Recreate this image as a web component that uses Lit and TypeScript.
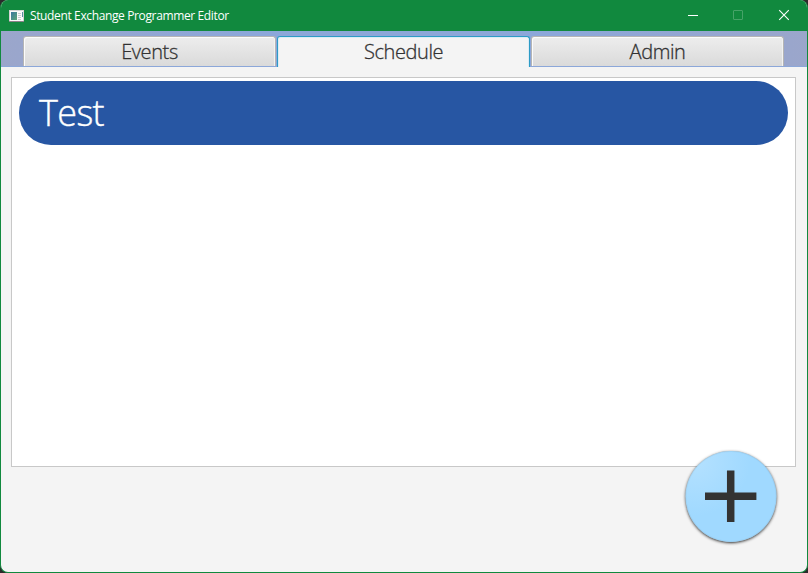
import { LitElement, html, css } from "lit";
import { customElement, property, state } from "lit/decorators.js";
import { classMap } from "lit/directives/class-map.js";

@customElement("title-bar")
class TitleBar extends LitElement {
  @property() heading = "";

  static styles = css`
    :host {
      display: flex;
      align-items: center;
      height: 31px;
      flex: none;
      box-sizing: border-box;
      padding-left: 8px;
      margin-right: -1px;
      background: #11893e;
      color: #fff;
    }
    .app-icon { flex: none; margin-right: 6px; }
    .heading {
      flex: 1;
      font: 12px/31px "Open Sans", "Noto Sans", sans-serif;
      letter-spacing: -0.37px;
      white-space: nowrap;
    }
    .control {
      width: 46px;
      height: 31px;
      flex: none;
    }
  `;

  render() {
    return html`
      <svg class="app-icon" width="15" height="12" viewBox="0 0 15 12" shape-rendering="crispEdges">
        <defs>
          <linearGradient id="screen" x1="0" y1="0" x2="1" y2="1">
            <stop offset="0" stop-color="#3b78a0" />
            <stop offset="1" stop-color="#5da577" />
          </linearGradient>
        </defs>
        <rect width="15" height="12" fill="#8c8288" />
        <rect width="15" height="11" fill="#d4d4d4" />
        <rect x="1" y="1" width="13" height="10" fill="#fafafa" />
        <rect x="2" y="2" width="6" height="8" fill="url(#screen)" />
        <path d="M9 3.5h3M9 5.5h3M9 7.5h3M9 9.5h3" stroke="#c9cccf" />
        <rect x="13" y="2" width="1" height="5" fill="#5b8fa3" />
      </svg>
      <span class="heading">${this.heading}</span>
      <svg class="control" viewBox="0 0 46 31"><path d="M18 15.5h10" stroke="#fff" /></svg>
      <svg class="control" viewBox="0 0 46 31">
        <rect x="17.5" y="10.5" width="9" height="9" rx=".5" fill="none" stroke="#46a368" />
      </svg>
      <svg class="control" viewBox="0 0 46 31">
        <path d="M17.2 10.2l9.6 9.6M26.8 10.2l-9.6 9.6" stroke="#fff" stroke-width="1.1" />
      </svg>
    `;
  }
}

@customElement("fab-button")
class FabButton extends LitElement {
  static styles = css`
    :host { display: block; width: 91px; height: 91px; }
    button {
      display: block;
      width: 91px;
      height: 91px;
      padding: 0;
      border: 0;
      border-radius: 50%;
      transform: translateX(0.5px);
      background: radial-gradient(circle at 10% 10%, #b4e1ff 0, #a0d9ff 48%);
      box-shadow: 0 1px 3px rgba(0, 0, 0, 0.8), inset 0 0 1px rgba(60, 90, 110, 0.6);
    }
    svg { display: block; }
  `;

  render() {
    return html`<button aria-label="Add">
      <svg width="91" height="91" viewBox="0 0 91 91">
        <path d="M19.5 45.2h51.4M45.2 19.5v51.4" stroke="#333" stroke-width="7.5" />
      </svg>
    </button>`;
  }
}

@customElement("app-root")
class AppRoot extends LitElement {
  @state() private tabs = ["Events", "Schedule", "Admin"];
  @state() private selected = "Schedule";
  @state() private entries = ["Test"];

  static styles = css`
    :host {
      display: block;
      width: 808px;
      height: 573px;
      background: #2b2b2b;
      font-family: "Open Sans", "Noto Sans", sans-serif;
      font-weight: 300;
    }
    .window {
      position: relative;
      display: flex;
      flex-direction: column;
      box-sizing: border-box;
      height: 573px;
      border: 1px solid #11893e;
      border-top: 0;
      border-radius: 8px;
      overflow: hidden;
      background: #f4f4f4;
    }
    .tabs {
      display: flex;
      flex: none;
      gap: 1px;
      box-sizing: border-box;
      height: 36px;
      padding: 5px 22px 0;
      background: linear-gradient(90deg, #9ba6cb, #8ca7d9 30%, #8ca7d9 70%, #9ba6cb);
      box-shadow: inset 0 -1px #8ca7d9;
    }
    .tab {
      width: 253px;
      height: 30px;
      box-sizing: border-box;
      border: 1px solid #b5b5b5;
      border-bottom: 0;
      border-radius: 3px 3px 0 0;
      background: linear-gradient(#ededed, #dadada);
      box-shadow: inset 1px 1px #fbfbfb, inset -1px 0 #f2f2f2;
      color: #323232;
      font-size: 20px;
      line-height: 30px;
      text-align: center;
      letter-spacing: -0.4px;
      -webkit-text-stroke: 0.3px currentColor;
    }
    .tab.active {
      height: 31px;
      border-color: #2d9bc6;
      background: #f4f4f4;
      box-shadow: inset 1px 1px #dcecf4, inset -1px 0 #dcecf4;
    }
    .list {
      box-sizing: border-box;
      height: 390px;
      margin: 10px 11px 0 10px;
      padding: 3px 7px;
      border: 1px solid #c8c8c8;
      background: #fff;
    }
    .entry {
      height: 64px;
      box-sizing: border-box;
      padding-left: 20px;
      border-radius: 32px;
      background: #2756a3;
      color: #fff;
      font-size: 36px;
      line-height: 64px;
      letter-spacing: -0.6px;
      -webkit-text-stroke: 0.4px currentColor;
    }
    .add {
      position: absolute;
      right: 31px;
      bottom: 30px;
    }
  `;

  render() {
    return html`
      <div class="window">
        <title-bar heading="Student Exchange Programmer Editor"></title-bar>
        <nav class="tabs">
          ${this.tabs.map(
            (name) => html`<div
              class=${classMap({ tab: true, active: name === this.selected })}
              @click=${() => (this.selected = name)}
            >${name}</div>`
          )}
        </nav>
        <main class="list">
          ${this.entries.map((name) => html`<div class="entry">${name}</div>`)}
        </main>
        <fab-button class="add"></fab-button>
      </div>
    `;
  }
}
